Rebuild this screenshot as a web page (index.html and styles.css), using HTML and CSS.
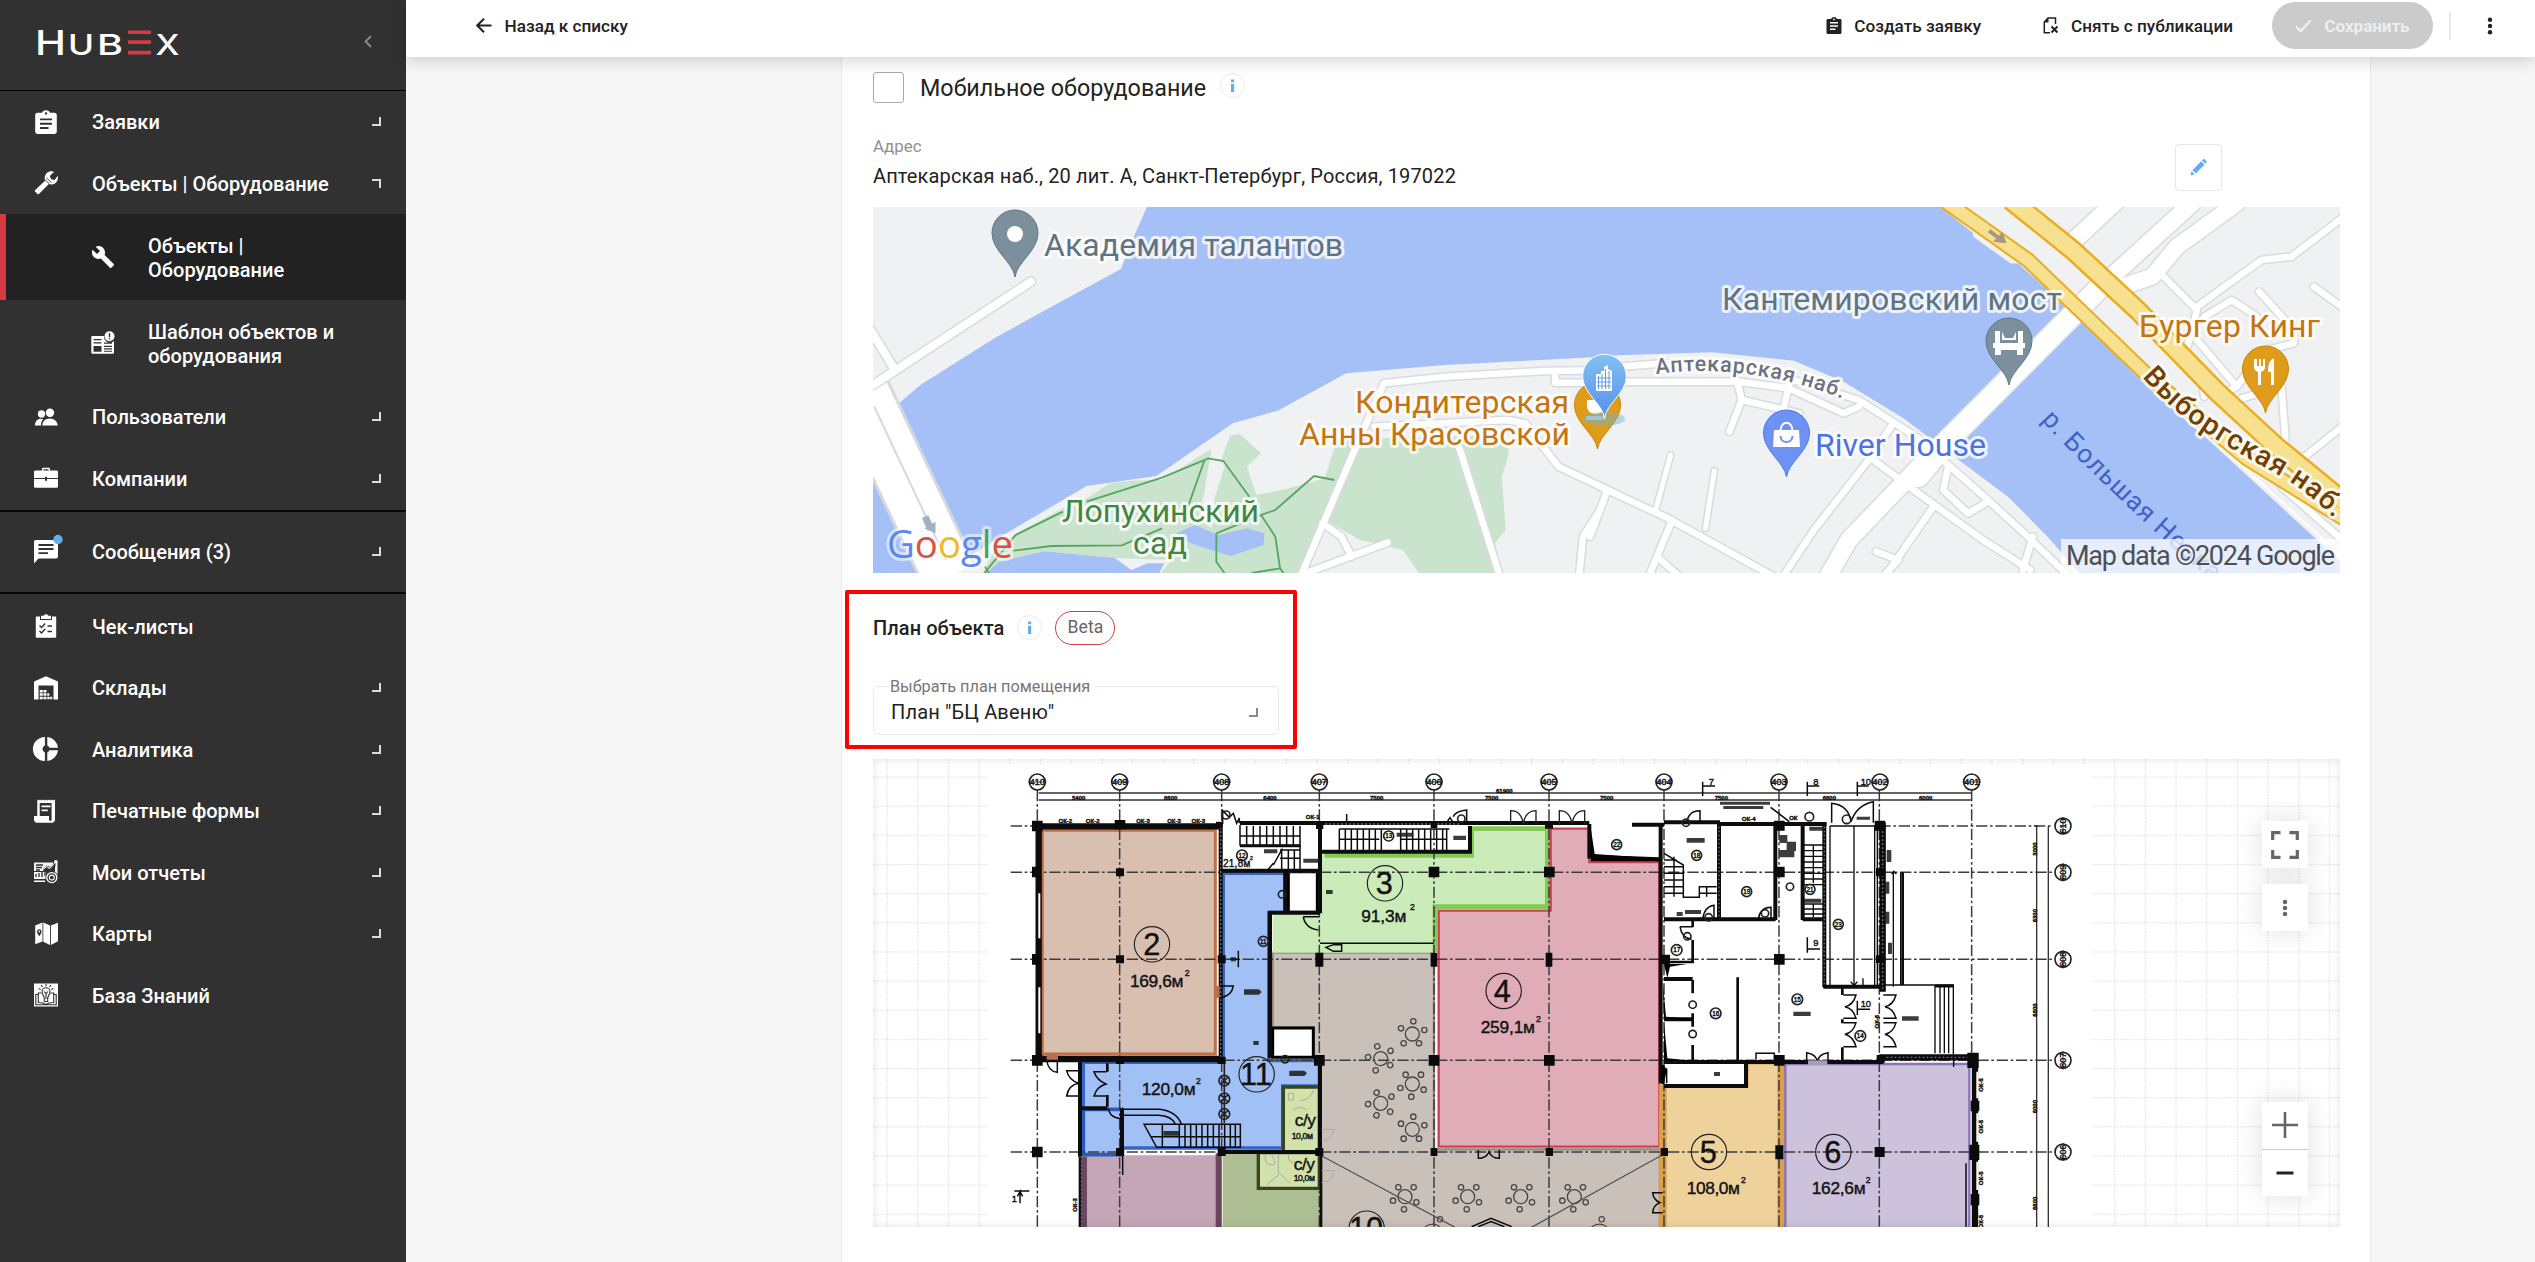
FILE: index.html
```html
<!DOCTYPE html>
<html lang="ru">
<head>
<meta charset="utf-8">
<title>HubEx</title>
<link rel="stylesheet" href="styles.css">
</head>
<body>
<div class="app">
  <aside class="sidebar">
    <div class="brand">
      <svg class="logo" viewBox="0 0 150 26" role="img" aria-label="HubEx">
        <g fill="#fff">
          <text x="-2" y="24.5" font-size="34" textLength="31" lengthAdjust="spacingAndGlyphs">H</text>
          <text x="31" y="24.5" font-size="29" textLength="26" lengthAdjust="spacingAndGlyphs">U</text>
          <text x="60" y="24.5" font-size="29" textLength="26" lengthAdjust="spacingAndGlyphs">B</text>
          <text x="118.500" y="24.5" font-size="29" textLength="24" lengthAdjust="spacingAndGlyphs">X</text>
        </g>
        <path d="M91 .5h23v3.600H91zM91 10.300h23v3.800H91zM91 20.700h23v3.800H91z" fill="#d63b43"/>
      </svg>
      <svg class="collapse" viewBox="0 0 8 13"><path d="M7 1 1.500 6.500 7 12"/></svg>
    </div>
    <nav>
      <div class="group">
        <a class="item"><svg class="ico" viewBox="0 0 24 24"><path d="M20.500 2.700H16C15.500 1.300 14 .3 12 .3S8.500 1.300 8 2.700H3.500c-1.300 0-2.300 1-2.300 2.200v16.800c0 1.200 1 2.200 2.300 2.200h17c1.300 0 2.300-1 2.300-2.200V4.900c0-1.200-1-2.200-2.300-2.200zM12 2.200a1.200 1.200 0 1 1 0 2.400 1.200 1.200 0 0 1 0-2.400zM14.500 19H6v-1.900h8.500zM18 14.700H6v-1.900h12zM18 10.300H6V8.400h12z"/></svg><span>Заявки</span><i class="caret"></i></a>
        <a class="item"><svg class="ico" viewBox="0 0 24 24"><path d="M1.200 19 11 9.800C10.200 6.800 10.800 4 12.800 2c2-1.800 5-2.200 7.300-1.200L15.800 5l1.300 3.300 3.600.8 2.900-4.300c.8 2.500.1 5.100-1.700 6.900-2 1.700-4.700 2.200-7 1.300L5.200 22.700c-.6.7-1.400.7-2 0l-2-2c-.5-.5-.5-1.200 0-1.700z"/><path d="m10.800 8.500 4.700 4.400M12.500 6.700l5 5" fill="none" stroke="#313131" stroke-width=".9"/></svg><span>Объекты | Оборудование</span><i class="caret caret-up"></i></a>
        <a class="item sub active"><svg class="ico" viewBox="0 0 24 24"><path d="M22.700 19l-9.100-9.100c.9-2.300.4-5-1.500-6.900-2-2-5-2.400-7.400-1.300L9 6 6 9 1.600 4.700C.4 7.100.9 10.100 2.900 12.100c1.900 1.900 4.600 2.400 6.900 1.500l9.100 9.100c.4.400 1 .4 1.400 0l2.300-2.300c.5-.4.5-1.100.1-1.400z"/></svg><span>Объекты |<br>Оборудование</span></a>
        <a class="item sub"><svg class="ico" viewBox="0 0 24 24"><path fill-rule="evenodd" d="M1.500 5H13a6 6 0 0 0 10 5v11.500c0 .8-.4 1.200-1 1.200H1.500c-.7 0-1.200-.5-1.200-1.200V6.200C.3 5.500.8 5 1.500 5zM2.500 8v1.300h8V8zm0 3.200v1.300h8v-1.300zM2.500 15v5.700h8V15zM13 11.500v1.300h8v-1.300zm0 3.300v1.300h8v-1.300zm0 2.500v1.200h8v-1.200zm0 2.500v1h8v-1z"/><circle cx="18.500" cy="5.300" r="5"/><path d="M17.800 2.200h1.400v4h-1.400zM17.800 7.200h1.400v1.300h-1.400z" fill="#313131"/></svg><span>Шаблон объектов и<br>оборудования</span></a>
        <a class="item"><svg class="ico" viewBox="0 0 24 24"><circle cx="7.500" cy="9" r="3.700"/><circle cx="16" cy="7.800" r="4.200"/><path d="M1 20.500c0-3.500 1.800-6.500 5.500-6.800 1 0 2 .2 2.800.5-1.800 1.600-2.500 4-2.300 6.300zM8.300 20.500c0-4.200 3.300-7 7.500-7s7.700 2.800 7.900 7z"/></svg><span>Пользователи</span><i class="caret"></i></a>
        <a class="item"><svg class="ico" viewBox="0 0 24 24"><path fill-rule="evenodd" d="M8 4.500V2.800c0-.6.400-1 1-1h6c.6 0 1 .4 1 1v1.700h6.500c.8 0 1.500.6 1.500 1.400V12h-11v-1.300h-2V12H0V5.900c0-.8.700-1.400 1.500-1.400zm1.400 0h5.200V3.200H9.400zM0 13.100h11v1.700h2v-1.700h11v7.300c0 .8-.7 1.400-1.500 1.400h-21c-.8 0-1.500-.6-1.500-1.400z"/></svg><span>Компании</span><i class="caret"></i></a>
      </div>
      <div class="group messages">
        <a class="item"><svg class="ico" viewBox="0 0 24 24"><path fill-rule="evenodd" d="M2 0h20c1.200 0 2 .8 2 2v14.500c0 1.200-.8 2-2 2H4.500L0 23.500V2C0 .8.800 0 2 0zm2.500 4v2h15V4zm0 4v2h15V8zm0 4.200v1.900H14v-1.900z"/><circle cx="24" cy="-.5" r="4.700" fill="#63aee8"/></svg><span>Сообщения (3)</span><i class="caret"></i></a>
      </div>
      <div class="group last">
        <a class="item"><svg class="ico" viewBox="0 0 24 24"><path d="M2.500 2.500H6V6h12V2.500h3.500c.4 0 .7.300.7.700V23c0 .4-.3.700-.7.700h-19c-.4 0-.7-.3-.7-.7V3.200c0-.4.300-.7.700-.7z"/><path d="M7 1.800h2.600C10 .8 10.900.2 12 .2s2 .6 2.400 1.600H17V5H7z"/><path d="m5.500 11.500 2 2 3.700-4M5.500 17l2 2 3.700-4M13.500 12H18M13.500 17.500H18" fill="none" stroke="#313131" stroke-width="1.400"/></svg><span>Чек-листы</span></a>
        <a class="item"><svg class="ico" viewBox="0 0 24 24"><path d="M0 5.500 12 .2l12 5.300v18h-4.500V9.500h-15v14H0z"/><path d="M5.700 14h3.100v2.500H5.700zM9.500 14h3v2.500h-3zM5.700 17.300h3.100v2.500H5.700zM9.500 17.300h3v2.500h-3zM13.300 17.300h2v2.500h-2zM5.700 20.700h3.100v2.500H5.700zM9.500 20.700h3v2.500h-3zM13.300 20.700h2.300v2.500h-2.300zM16.200 20.700h2v2.500h-2z"/></svg><span>Склады</span><i class="caret"></i></a>
        <a class="item"><svg class="ico" viewBox="0 0 24 24"><path d="M10.900 0v8.600a3.600 3.600 0 0 0 0 6.800V24A12 12 0 0 1 10.900 0zM13.300 0A12 12 0 0 1 24 10.800h-8.600a3.600 3.600 0 0 0-2.100-2.200zM13.300 24v-8.600a3.600 3.600 0 0 0 2.100-2.200H24A12 12 0 0 1 13.300 24z"/></svg><span>Аналитика</span><i class="caret"></i></a>
        <a class="item"><svg class="ico" viewBox="0 0 24 24"><path fill-rule="evenodd" d="M3.300.5 4.500 1.500 6 .5l1.500 1L9 .5l1.500 1 1.500-1 1.500 1 1.500-1 1.500 1 1.500-1 1.500 1 1.500-1v20c0 1.800-1.200 3.200-3 3.200H3C1.200 23.700 0 22.300 0 20.500V17h3.300zM5.700 4v13H15v3.500c0 .8.600 1.300 1.300 1.300s1.300-.5 1.300-1.300V4z"/><path d="M7.500 6.500h9v1.800h-9zM7.500 10.500h6.300v1.800H7.500z"/></svg><span>Печатные формы</span><i class="caret"></i></a>
        <a class="item"><svg class="ico" viewBox="0 0 24 24"><path d="M0 2.500h19V5l-3 4-4-2-3 4H0zM0 12h12v7H0zM22 1l1.500 1v14H21V8z" opacity=".95"/><path d="M2 5h7M2 7.500h6M2 10h4M2 14v3M5 13v4M8 11v6M11 9v7M9.500 9.500l4-4 3.500 2 5-6" fill="none" stroke="#313131" stroke-width="1.300"/><path d="m10 9 4-4 3 2.300 4.500-5.500" fill="none" stroke="#fff"/><circle cx="21.800" cy="1.800" r="1.800"/><circle cx="17.800" cy="17.600" r="6.400" fill="#313131"/><circle cx="17.800" cy="17.600" r="5" fill="none" stroke="#fff" stroke-width="1.300"/><circle cx="17.800" cy="17.600" r="2.500" fill="none" stroke="#fff" stroke-width="1.100"/><path d="M0 20.500h11v1.500H0z"/></svg><span>Мои отчеты</span><i class="caret"></i></a>
        <a class="item"><svg class="ico" viewBox="0 0 24 24"><path fill-rule="evenodd" d="M1.200 3.500 8.500.5v19l-7.300 2.700zM5.300 7.200c-1.300 0-2.300 1-2.300 2.300 0 1.600 2.300 4.700 2.300 4.700s2.300-3.100 2.300-4.700c0-1.300-1-2.300-2.300-2.300zM9.300.5l6.700 3V23l-6.700-3.200zM16.900 3.500 24 .8v18.500L16.900 23z"/><circle cx="5.300" cy="9.500" r=".9"/></svg><span>Карты</span><i class="caret"></i></a>
        <a class="item"><svg class="ico" viewBox="0 0 24 24"><path d="M0 .5h24v23H0z"/><g fill="none" stroke="#313131" stroke-width="1.100"><path d="M10.300 18.500V15C9.800 12.600 8 11.500 8 8.800a4 4 0 0 1 8 0c0 2.700-1.800 3.800-2.300 6.200v3.500zM12 10v6M10 8.500l2 2.200 2-2.200M12 1v2.300M7.200 2l1.200 2M16.800 2l-1.200 2M4.700 5.500l2 .9M19.300 5.500l-2 .9"/><path d="M7.500 10H4.300v9.500c3 0 5.700.5 7.700 2 2-1.500 4.700-2 7.700-2V10h-3.200M3.800 11.500H1.800v10.300h20.400V11.500h-2"/></g></svg><span>База Знаний</span></a>
      </div>
    </nav>
  </aside>

  <main class="main">
    <header class="topbar">
      <a class="action back"><svg viewBox="0 0 16 16"><path d="M15.500 8H1.500M8 1.200 1.200 8 8 14.800" fill="none" stroke="#222" stroke-width="2"/></svg>Назад к списку</a>
      <div class="spacer"></div>
      <a class="action create"><svg viewBox="0 0 16 17"><path fill-rule="evenodd" d="M1.800 2H5C5.500.8 6.500 0 8 0s2.500.8 3 2h3.200C15 2 15.500 2.600 15.500 3.300v12.200c0 .8-.5 1.400-1.300 1.400H1.800c-.8 0-1.300-.6-1.300-1.400V3.300C.5 2.600 1 2 1.800 2zM4 5v1.500h8V5zm0 3.200v1.500h8V8.200zm0 3.300V13h5.500v-1.500zM8 1.500A.9.900 0 1 0 8 3.300a.9.900 0 0 0 0-1.800z" fill="#222"/></svg>Создать заявку</a>
      <a class="action unpublish"><svg viewBox="0 0 16 17"><path d="M7 15.700H1.300V5L5 1h7.500v6" fill="none" stroke="#222" stroke-width="1.500"/><path d="M1 5.500 5.500.7v4.800z" fill="#222"/><path d="m8.500 9.500 6 6m0-6-6 6" stroke="#222" stroke-width="2"/></svg>Снять с публикации</a>
      <button class="save"><svg viewBox="0 0 17 14"><path d="m1.200 7.500 4.600 4.800L15.700 1.300" fill="none" stroke="#f0f0f0" stroke-width="2.400"/></svg>Сохранить</button>
      <i class="divider"></i>
      <svg class="more" viewBox="0 0 24 24"><circle cx="12" cy="5.800" r="2.200"/><circle cx="12" cy="12" r="2.200"/><circle cx="12" cy="18.200" r="2.200"/></svg>
    </header>

    <section class="card">
      <label class="mobile"><i class="check"></i><span>Мобильное оборудование</span><svg class="info" viewBox="0 0 25 25"><circle cx="12.500" cy="12.500" r="12"/><path d="M11 6.500h3.200v2.800H11zM11 10.800h3.200v8.200H11z"/></svg></label>

      <div class="address">
        <div>
          <div class="caption">Адрес</div>
          <div class="value">Аптекарская наб., 20 лит. А, Санкт-Петербург, Россия, 197022</div>
        </div>
        <button class="edit"><svg viewBox="0 0 17 17"><path d="M.5 16.500 1.600 12l2.900 3.400zM2.400 11.200l8.800-8.900 3.300 3.400-8.800 8.900zM12 1.500l.9-.9c.7-.7 1.500-.6 2.200 0l1 1.100c.7.700.7 1.500 0 2.200l-.8.900z"/></svg></button>
      </div>

      <svg class="map" viewBox="873 207 1467 366">
        <defs>
          <path id="pin" d="M0 0C-2-15-23-26-23-44a23 23 0 0 1 46 0C23-26 2-15 0 0z"/>
          <linearGradient id="blue" x1="0" y1="0" x2="0" y2="1"><stop offset="0" stop-color="#82c0f2"/><stop offset="1" stop-color="#5690ec"/></linearGradient>
          <g id="streets" fill="none" stroke-linejoin="round" stroke-linecap="round">
            <g transform="translate(860 200) scale(.47194 .33333)">
              <path class="w7" d="M362 245 28 555M20 385 55 465 73 508"/>
              <path class="w6" d="M1600 510 1450 513 1240 530 1110 550 1045 760 935 1125M1600 548H1473V522"/>
              <path class="w6" d="M1090 680 1370 660 1410 670 1480 800 1600 880M1270 745 1355 1125"/>
              <path class="w6" d="M980 970 1020 1010 1042 1070M1118 1028 945 1119M1568 930 1532 1010 1524 1125"/>
            </g>
            <g transform="translate(1600 200) scale(.49745 .33333)">
              <path class="w6" d="M0 505 130 490 270 500 400 545 520 600 640 715 780 900 860 1010 940 1125M-20 545H280L380 565 490 640 520 620"/>
              <path class="w6" d="M275 540 285 600 260 695M380 555 370 620M285 600 400 640M0 860 130 950 240 1040 350 1130M15 870-20 1010M145 960 98 1130M115 1070 160 1130"/>
              <path class="w5" d="M142 765 112 930M230 812 212 985"/>
              <path class="w6" d="M585 680 540 780 430 990 370 1125M550 780 640 880 770 1020 865 1110M670 920 575 1125M700 800 690 870 740 940 780 905M870 1010 850 1110M555 1055 600 1080 575 1119"/>
              <path class="w20" d="M680 740 500 1020 460 1125"/>
              <path class="w24" d="M1010 255 700 720 640 830"/>
              <path class="w20" d="M1010 255 1190 10M940 140 1040 0"/>
              <path class="w16" d="M1050 260 1110 230 1160 140 1280 10"/>
              <path class="w6" d="M1130 225 1200 330 1180 445M1200 320 1330 180 1390 170 1500 45M1435 260 1500 330M1325 275 1395 390 1395 430 1340 450M1215 350 1270 300 1320 350M1200 420 1280 560 1240 590M1280 560 1310 500M1290 595 1370 560 1378 720M1500 670 1400 790M1210 540 1215 590M1370 860 1500 1030"/>
            </g>
          </g>
        </defs>
        <path d="M873 207h1467v366H873z" fill="#f0f1f3"/>
        <g transform="translate(860 200) scale(.47194 .33333)">
          <path fill="#a5bff7" d="M610 15 580 110 553 207 400 325 290 410 130 553 78 615 70 640V680L20 660V1130H130L165 1085 230 1070 310 1000 480 858 628 828 790 670 885 632 1030 520 1240 495 1575 470V15z"/>
          <path fill="#c9e3cd" d="M262 1125 275 1070 325 1005 430 925 480 895 530 850 575 842 640 840 743 748 750 800 725 900 750 930 752 830 785 705 805 703 850 760 820 800 840 885 900 868 985 835 1010 720 1110 715 1365 705 1375 760 1360 830 1368 990 1345 1030 1362 1130H1190L1150 1050 1060 1020 985 960 935 1130H630L660 1080 540 1074 390 1054 300 1085z"/>
          <path fill="#f0f1f3" d="M743 760 720 960 745 985 750 900 775 790z"/>
          <path fill="#a5bff7" d="M670 1000 710 975 760 1005 820 985 857 1000 855 1035 785 1068 700 1030zM262 1125 295 1085 390 1054 540 1074 575 1110 610 1090 645 1090 630 1130z"/>
          <g class="trail"><path d="M260 1125 330 1005 430 935M480 905 640 833 738 775 770 783 825 890M730 780 695 920M325 1052 405 1038 555 1036 640 985M1005 840 962 828 880 930 850 945 880 1010 890 1105 830 1119M755 1000V1085L775 1125M755 1000 850 945M890 1105 900 1125M265 1100 275 1125"/></g>
        </g>
        <g transform="translate(1600 200) scale(.49745 .33333)">
          <path fill="#a5bff7" d="M-5 15V468L225 457 390 482 490 545 610 655 730 790 820 890 900 1010 970 1130H1520L1440 1018 1232 732 1100 560 960 350 840 190 825 190 750 100 680 15z"/>
          <path fill="#f0f1f3" d="M750 95V110L825 190H850z"/>
          <path class="w2" d="M1245 735 1440 1000 1520 1110" stroke="#fff" fill="none"/>
        </g>
        <g transform="translate(860 200) scale(.47194 .33333)" fill="none">
          <path d="M0 560 190 1130" stroke="#d5d8dd" stroke-width="58"/>
          <path d="M0 560 190 1130" stroke="#fff" stroke-width="52"/>
          <path class="w2" d="M30 620 183 1080" stroke="#d5d8dd"/>
          <path d="m138 950 12 38" stroke="#a2b0c4" stroke-width="7"/><path d="m136 985 24 15V965z" fill="#a2b0c4"/>
        </g>
        <use href="#streets" class="casing"/>
        <use href="#streets" class="street"/>
        <g transform="translate(1600 200) scale(.49745 .33333)" fill="none">
          <g stroke="#e9ae1f"><path class="w23" d="M690 0 860 180 1100 525 1300 775 1500 960"/><path class="w25" d="M825 0 950 150 1080 330 1240 575 1360 740 1520 935"/></g>
          <g stroke="#f7e08f"><path class="w18" d="M690 0 860 180 1100 525 1300 775 1500 960"/><path class="w21" d="M825 0 950 150 1080 330 1240 575 1360 740 1520 935"/></g>
          <path class="w3" d="m782 92 22 25" stroke="#a39a80"/><path d="m790 125 27 5-8-35z" fill="#a39a80"/>
        </g>

        <g stroke-width="1">
          <use href="#pin" x="1015" y="277" fill="#7b8f9c" stroke="#5f7687"/><circle cx="1015" cy="234" r="8" fill="#fff"/>
          <use href="#pin" x="2009" y="385" fill="#7b8f9c" stroke="#5f7687"/>
          <use href="#pin" x="1786.500" y="477" fill="#6d92f4" stroke="#4d78e6"/>
          <use href="#pin" x="2265.500" y="413" fill="#df9c1b" stroke="#c98400"/>
          <use href="#pin" x="1597.500" y="449" fill="#df9c1b" stroke="#c98400"/>
        </g>
        <path d="M1587 400h18v6c0 5-4 8-9 8s-9-3-9-8z" fill="#fff"/>
        <ellipse cx="1604" cy="419" rx="21" ry="7" fill="#6fb4cf" opacity=".45"/>
        <path d="M1586 416h20v4h-20z" fill="#9fc4d8"/>
        <g transform="translate(1604.500 418) scale(.95)"><use href="#pin" fill="url(#blue)" stroke="#fff"/></g>
        <path d="M1596 374h5v-3h3v-4l4-2v4l4 2v20h-16z" fill="#fff"/><path d="M1598.500 376v13m3.500-15v15m3.500-20v20m3.500-18v18M1597 378h14m-14 4h14m-14 4h14" stroke="#609bed" stroke-width="1"/>
        <path d="M1995 331h5v12h18v-12h5v12h2v5h-2v7h-6v-5h-16v5h-6v-7h-2v-5h2zM2002 332l3 6h8l3-6v8h-14z" fill="#fff"/>
        <path d="M1774 430h25l1 17h-27z" fill="#fff"/><path d="M1780.500 431c0-11 12-11 12 0" fill="none" stroke="#fff" stroke-width="2"/><path d="M1780.500 436c0 8 12 8 12 0" fill="none" stroke="#6d92f4" stroke-width="2"/>
        <path d="M2254 359v8c0 3 2 4 4 5v13h3v-13c2-1 4-2 4-5v-8h-2v7h-2v-7h-2v7h-2v-7zM2274 358c-5 2-6 8-6 14h3v13h3z" fill="#fff"/>

        <g class="label" font-size="32">
          <g fill="#5f7383"><text x="1044" y="255.500" textLength="299">Академия талантов</text><text x="1722" y="310" textLength="340">Кантемировский мост</text></g>
          <g fill="#c5750f"><text x="1355" y="412.700" textLength="214">Кондитерская</text><text x="1299" y="445" textLength="271">Анны Красовской</text><text x="2139" y="336.700" textLength="181">Бургер Кинг</text></g>
          <g fill="#41863f"><text x="1062" y="522" textLength="197">Лопухинский</text><text x="1133" y="554" textLength="54">сад</text></g>
          <text x="1815" y="456" textLength="171" fill="#4a74e4">River House</text>
          <path id="q1" d="M1656 374Q1750 362 1846 400" fill="none" stroke="none"/>
          <text font-size="21.500" font-weight="500" fill="#6b7280"><textPath href="#q1" textLength="190">Аптекарская наб.</textPath></text>
          <path id="q2" d="M2142 377C2190 432 2240 452 2290 482Q2312 496 2338 522" fill="none" stroke="none"/>
          <text font-size="28.500" font-weight="500" fill="#6f3f05"><textPath href="#q2" textLength="240">Выборгская наб.</textPath></text>
        </g>
        <path id="q3" d="M2041 420Q2110 495 2224 592" fill="none"/>
        <text font-size="26" fill="#3f62c4"><textPath href="#q3" textLength="236">р. Большая Невка</textPath></text>
        <path d="M2061 539h279v34h-279z" fill="#fff" opacity=".72"/>
        <text x="2066" y="565" font-size="27" textLength="269" fill="#4d4f54">Map data ©2024 Google</text>
        <text class="google" x="887" y="557.500" textLength="126" lengthAdjust="spacingAndGlyphs"><tspan fill="#5b86ee">G</tspan><tspan fill="#dc5240">o</tspan><tspan fill="#f1b828">o</tspan><tspan fill="#5b86ee">g</tspan><tspan fill="#47a35a">l</tspan><tspan fill="#dc5240">e</tspan></text>
      </svg>

      <div class="plan-head">
        <div class="title"><h3>План объекта</h3><svg class="info" viewBox="0 0 25 25"><circle cx="12.500" cy="12.500" r="12"/><path d="M11 6.500h3.200v2.800H11zM11 10.800h3.200v8.200H11z"/></svg><span class="beta">Beta</span></div>
        <fieldset class="select"><legend>Выбрать план помещения</legend><span>План "БЦ Авеню"</span><i class="caret"></i></fieldset>
        <i class="highlight"></i>
      </div>

      <div class="plan">
        <svg viewBox="873 759 1467 468">
          <defs>
            <pattern id="grid" patternUnits="userSpaceOnUse" x="886.500" y="776.500" width="30.690" height="29.150"><path d="M0 .6h30.690M.6 0v29.150" fill="none" stroke="#e2e2e2" stroke-width="1.300" stroke-dasharray="1.600 1.400"/></pattern>
            <g id="table" fill="none" stroke="#4a4644" stroke-width="4"><circle r="21"/><circle cx="3" cy="-38" r="8"/><circle cx="36" cy="-12" r="8"/><circle cx="-34" cy="-17" r="8"/><circle cx="20" cy="28" r="8"/><circle cx="-26" cy="28" r="8"/></g>
            <g id="door" fill="none" stroke="#222" stroke-width="4"><path d="M-38 0v-44Q-6-44 0-4Q6-44 38-44V0"/></g>
          </defs>
          <path d="M873 759h1467v468H873z" fill="url(#grid)"/>
          <path d="M988 765h1103v470H988z" fill="#fff"/>
          <g transform="translate(960 750) scale(.33333)">
            <path fill="#cac0ba" stroke="#94877f" stroke-width="7" d="M938 608H1422V1198H2100V1440H1080V930H1060V832H938z"/>
            <path fill="#d9bfb0" stroke="#bf7143" stroke-width="9" d="M247 241H766V912H247z"/>
            <path fill="#a1c0f6" stroke="#3465c4" stroke-width="10" d="M790 370H974V487H926V932H1078V1008H968V1194H488V1214H370V937H790z"/>
            <path fill="#cbebb8" d="M938 492H1080V310H1535V232H1767V475H1422V608H938z"/>
            <path fill="none" stroke="#83ca55" stroke-width="14" d="M1094 316H1535V236H1762V470H1425V606"/>
            <path fill="#e0acb8" stroke="#c9404f" stroke-width="7" d="M1772 236H1888V336H2098V1190H1436V482H1772z"/>
            <path fill="#efd19c" stroke="#dd9d3a" stroke-width="7" d="M2100 1008H2362V940H2472V1440H2100z"/>
            <path stroke="#dba04a" stroke-width="20" d="M2462 942V1440M2110 1010V1440"/>
            <path fill="#ccc2db" stroke="#8c72b8" stroke-width="7" d="M2476 942H3028V1440H2476z"/>
            <path fill="#c4a6b7" d="M370 1216H785V1440H370z"/><path stroke="#6b4660" stroke-width="18" d="M776 1210V1440M372 1220V1440"/>
            <path fill="#adbf92" d="M788 1208H1080V1440H788z"/>
            <path fill="#d3e2aa" stroke="#37461c" stroke-width="10" d="M970 1011H1078V1205H970zM895 1208H1078V1315H895z"/>
            <path d="M370 1078H486V1214H370z" fill="#a1c0f6" stroke="#2c5abb" stroke-width="11"/>
            <path fill="#fff" stroke="#000" stroke-width="9" d="M985 365H1072V487H985zM938 834H1060V922H938z"/>
            <path fill="#fff" d="M790 224H1078V358H790zM1092 228H1532V302H1092zM2112 942H2355V1003H2112z"/>

            <g class="axis">
              <path d="M232 120V1440M479 120V1440M785 120V1210M1078 120V1440M1422 120V1440M1767 120V1440M2112 120V1440M2457 120V1440M2758 120V1440M3035 120V910"/>
              <path d="M152 228H232M2758 228H3280M152 367H3280M152 628H3280M152 931H3280M152 1206H3280"/>
            </g>
            <path d="M236 129H3035M236 150H3035M3230 228V1440M3265 228V1440M3235 228h-12" stroke="#333" stroke-width="4" fill="none"/>
            <path d="M1080 1215 1500 1440M2112 1212 1700 1440" stroke="#555" stroke-width="4" fill="none"/>

            <g fill="none" stroke="#0c0c0c">
              <path stroke-width="19" d="M236 228V931M232 229H785M232 927H785M2768 218V725M2758 922H3052M3045 912V1440"/>
              <path stroke-width="12" d="M782 220V930M840 219H1888M1080 220V490M976 362V488M780 362H1080M930 488V925M925 488H1080M2016 224H2112M2102 224V1000M1084 305H1530V228M1888 222V320L2100 328M2112 217H2280M2280 222H2600M2277 222V510M2446 222V510M2528 222V510M2593 222V712M2112 508H2447M2528 508H2593M2590 710H2770M2112 936H2770M2358 940V1008H2112M360 930V1220M364 1075H442M486 1075V1215M1080 930V1206M788 1206H1080M2112 687H2198M2112 808H2198"/>
              <path stroke-width="8" d="M2198 510V530M2198 570V640M2198 690V730M2198 790V830M2198 885V935M2333 682V930M2647 712V735M2647 808V820M2647 892V932M2112 636H2198M442 940V965M442 1035V1070M1083 1210V1440M360 1220V1440M2828 367V705"/>
              <path stroke="#fff" stroke-width="6" d="M238 430V565M238 712V850M3052 965V1045M3052 1090V1175M3052 1235V1320"/>
              <path stroke="#777" stroke-width="4" stroke-dasharray="5 7" d="M782 232V925M1084 222H1500M2768 232V720M2780 922H3040M2277 230V505M2593 230V705M364 1220V1430"/>
              <path stroke-width="4.500" d="M840 225V285H1022M840 258H1022M860 228v56M880 228v56M900 228v56M920 228v56M940 228v56M960 228v56M980 228v56M1000 228v56M1020 228v130M960 300H1020M960 325H1020M940 345 965 300V358M985 300v58M1003 300v58M925 358l15-18"/>
              <path stroke-width="8" d="M840 288H1022"/>
              <path stroke-width="4.500" d="M1138 237v66M1156 237v66M1174 237v66M1192 237v66M1210 237v66M1228 237v66M1246 237v66M1264 237v66M1322 237v66M1340 237v66M1358 237v66M1376 237v66M1394 237v66M1412 237v66M1430 237v66M1448 237v66M1460 237v66M1138 268h120M1322 268h140M1138 237h330"/>
              <path stroke-width="4.500" d="M552 1123H841V1192H590zM658 1123v70M675 1123v70M692 1123v70M709 1123v70M726 1123v70M743 1123v70M760 1123v70M777 1123v70M794 1123v70M811 1123v70M826 1123v70M658 1160h183M607 1123v70M572 1160h86M490 1078H600Q650 1085 664 1122M490 1096H595Q635 1098 646 1122M445 1075Q450 1106 490 1106"/>
              <path stroke-width="4.500" d="M2112 330H2150M2112 350H2170M2112 370H2170M2112 390H2170M2112 410H2170M2112 430H2170M2142 320V440M2112 310 2170 345V442H2218V410H2270M2218 430H2270M2240 410v30"/>
              <path stroke-width="4" d="M2532 285h58M2532 302h58M2532 319h58M2532 336h58M2532 353h58M2532 370h58M2532 387h58M2532 404h58M2532 462h58M2532 477h58M2532 492h58M2560 285v115M2560 462v40"/>
              <path stroke-width="4" d="M2610 228V705M2682 228V705M2744 228V705M2752 228V705M2610 228H2750M2800 367V710M2822 367V705M2770 705H2980V912M2925 705v205M2940 705v205M2953 705v205M2966 705v205M2672 695l10 12 10-12M2709 685v22M2795 372l6-8 8 8"/>
              <path stroke-width="9" d="M2925 708h55"/>
              <path stroke-width="4.500" d="M2770 735H2808Q2800 765 2775 770Q2800 775 2808 805H2770M2770 818H2808Q2800 848 2775 853Q2800 860 2808 890H2770M2650 735H2688Q2680 765 2655 770Q2680 775 2688 805H2650M2650 818H2688Q2680 848 2655 853Q2680 860 2688 890H2650"/>
              <path stroke-width="4.500" d="M2615 218V160Q2665 165 2673 215Q2690 165 2740 155V218M2180 218q5-36 40-36v36M360 962H320Q326 990 356 1000Q326 1005 320 1038H360M440 965H402Q410 990 438 1002Q410 1010 402 1038H440M260 930Q265 965 292 967V930M780 708H820Q815 738 785 742M1030 500H1078M1030 500Q1035 535 1075 540M2540 935V908Q2568 912 2572 935Q2576 912 2604 908V935M788 222V182l20 20 12-12 10 30 8-16v16M2395 508q5-36 38-36v36M2228 508q5-38 34-42v42M2160 530h40M2160 530q5 35 35 38M2120 955V1000M1555 1200V1225Q1580 1225 1587 1205Q1595 1225 1618 1225V1200M2108 1328H2078Q2080 1350 2100 1358Q2080 1365 2078 1388H2108M1080 580H1422M1098 592 1120 584H1145V604H1120zM1460 218l10 -15 10 15M1480 200q5-16 40-20v38M1535 1430l58-25 62 25M1555 1430l38-15 40 15M2388 928v-18h55v18"/>
              <path stroke="#aaa" stroke-width="3" d="M1085 1138h38q-8 32-38 34M1085 1262h38q-4 34-38 36M985 1030h15v20h-15zM1060 1020q-8 30-38 32M1000 1080q20-15 40 0M915 1215q0 30 20 30t0-30M955 1215v60l-35 30M960 1270l30 30M985 1215q0 30 20 20"/>
              <path stroke-width="4.500" d="M835 602V652M810 628H835M163 1323H208M180 1360V1325l-8 14m8-14 8 14M488 1215V1275M2228 95V138M2230 108H2265M2542 95V138M2544 108H2578M2692 95V138M2694 108H2726M2542 562V608M2544 597H2580M2692 752V795M2694 778H2730M2432 172 2488 215M2981 930V950M3018 1440V1240M1160 192V215"/>
            </g>
            <path d="M2108 694 2118 800 2198 806V812L2112 806zM2112 816 2122 925 2195 932H2112zM2112 642H2180L2130 650 2122 684zM2112 945 2120 960 2112 1003H2104V945zM1892 232l12 80 196 14v8h-208z" fill="#000"/>
            <path fill="#0a0a0a" d="M216 212h32v32h-32zM464 210h32v28h-32zM2442 212h32v30h-32zM2744 212h32v30h-32zM468 355h24v24h-24zM1406 350h32v32h-32zM1752 350h32v32h-32zM2442 350h32v32h-32zM2748 355h24v24h-24zM216 350h24v32h-24zM216 612h24v32h-24zM468 616h24v24h-24zM773 616h24v24h-24zM1066 608h24v42h-24zM1412 608h20v42h-20zM1757 608h20v42h-20zM2100 614h30v28h-30zM2442 612h32v32h-32zM2748 616h24v24h-24zM216 915h32v32h-32zM468 920h24v22h-24zM773 920h24v22h-24zM1062 915h32v32h-32zM1406 915h32v32h-32zM1752 915h32v32h-32zM2442 915h32v32h-32zM2750 915h24v24h-24zM3022 908h34v46h-34zM216 1190h32v32h-32zM468 1194h24v24h-24zM773 1194h24v24h-24zM1066 1194h24v24h-24zM1412 1194h20v24h-20zM1757 1194h22v24h-22zM2102 1194h22v24h-22zM2446 1186h24v42h-24zM2744 1191h30v30h-30zM3028 1184h30v46h-30zM3032 1052h26v32h-26zM3032 1332h26v34h-26zM768 215h20v20h-20zM1068 215h22v22h-22zM1412 216h20v18h-20zM1755 216h24v20h-24z"/>
            <path fill="#b8704a" d="M765 708h14v36h-14zM260 915h34v14h-34z"/>
            <path fill="#a89bbd" d="M2544 931h58v14h-58z"/>
            <path fill="#1a1a1a" d="M852 718h45l8 8-8 8h-45zM988 962h45l8 8-8 8h-45zM1030 326h50v12h-50zM912 298h40v12h-40zM610 1143h48v14h-48zM2180 264h54v14h-54zM2175 480h48v12h-48zM2150 486h18v12h-18zM2500 785h52v13h-52zM2826 799h50v13h-50zM1480 257h38v13h-38zM2548 230h42v12h-42zM2532 446h52v12h-52zM2262 966h18v12h-18zM880 873h16v12h-16zM2458 255h24v24h-24zM2480 275h28v28h-28zM2458 300h45v22h-45zM812 622h16v12h-16zM1098 420h20v12h-20zM2280 155h150v9h-150zM2290 168h120v9h-120zM2780 300h14v36h-14zM2776 395h12v36h-12zM2776 485h12v36h-12zM2784 578h12v34h-12zM1310 248h50v12h-50zM2690 200h40v9h-40z" opacity=".85"/>
            <use href="#door" x="1690" y="226"/><use href="#door" x="1836" y="226"/>

            <use href="#table" x="1357" y="852"/><use href="#table" transform="translate(1262 926) rotate(-20)"/><use href="#table" transform="translate(1357 1002) rotate(180)"/><use href="#table" transform="translate(1262 1060) rotate(195)"/><use href="#table" x="1357" y="1138"/>
            <use href="#table" transform="translate(1335 1340) rotate(180)"/><use href="#table" transform="translate(1523 1340) rotate(180)"/><use href="#table" transform="translate(1682 1340) rotate(180)"/><use href="#table" transform="translate(1843 1340) rotate(180)"/>
            <g fill="none" stroke="#4a4644" stroke-width="3.500"><circle cx="1440" cy="1408" r="8"/><circle cx="1925" cy="1408" r="8"/><path d="M1395 1430q25-15 45 0M1895 1430q25-15 45 0"/></g>

            <g fill="none" stroke="#222" stroke-width="5">
              <g fill="#fff"><circle cx="232" cy="96" r="24"/><circle cx="479" cy="96" r="24"/><circle cx="785" cy="96" r="24"/><circle cx="1078" cy="96" r="24"/><circle cx="1422" cy="96" r="24"/><circle cx="1767" cy="96" r="24"/><circle cx="2112" cy="96" r="24"/><circle cx="2457" cy="96" r="24"/><circle cx="2760" cy="96" r="24"/><circle cx="3035" cy="96" r="24"/>
              <circle cx="3309" cy="228" r="24"/><circle cx="3309" cy="367" r="24"/><circle cx="3309" cy="628" r="24"/><circle cx="3309" cy="931" r="24"/><circle cx="3309" cy="1206" r="24"/></g>
              <path d="M205 96h54M452 96h54M758 96h54M1051 96h54M1395 96h54M1740 96h54M2085 96h54M2430 96h54M2733 96h54M3008 96h54M3309 201v54M3309 340v54M3309 601v54M3309 904v54M3309 1179v54" stroke-width="2.500"/>
              <g stroke-width="3.500"><circle cx="576" cy="583" r="53"/><circle cx="890" cy="973" r="53"/><circle cx="1275" cy="400" r="53"/><circle cx="1631" cy="723" r="53"/><circle cx="2247" cy="1206" r="53"/><circle cx="2620" cy="1206" r="53"/><circle cx="1220" cy="1436" r="53"/></g>
              <circle cx="793" cy="992" r="16"/><circle cx="793" cy="1045" r="16"/><circle cx="793" cy="1092" r="16"/><path d="M782 981l22 22m0-22-22 22M782 1034l22 22m0-22-22 22M782 1081l22 22m0-22-22 22M793 940v180"/>
              <circle cx="966" cy="433" r="11"/><circle cx="910" cy="574" r="15"/><circle cx="975" cy="928" r="11"/><circle cx="846" cy="316" r="16"/><circle cx="798" cy="195" r="12"/><circle cx="1286" cy="258" r="15"/><circle cx="1970" cy="284" r="15"/><circle cx="2210" cy="316" r="15"/><circle cx="2360" cy="425" r="15"/><circle cx="2550" cy="418" r="15"/><circle cx="2490" cy="410" r="11"/><circle cx="2635" cy="523" r="15"/><circle cx="2150" cy="600" r="16"/><circle cx="2182" cy="559" r="11"/><circle cx="2512" cy="748" r="16"/><circle cx="2267" cy="790" r="16"/><circle cx="2701" cy="858" r="16"/><circle cx="2198" cy="764" r="11"/><circle cx="2198" cy="852" r="11"/><circle cx="2246" cy="502" r="11"/><circle cx="2415" cy="490" r="11"/><circle cx="2660" cy="208" r="13"/><circle cx="2548" cy="200" r="13"/><circle cx="2178" cy="218" r="11"/><circle cx="1504" cy="206" r="11"/>
            </g>
            <g class="room">
              <g font-size="92" text-anchor="middle"><text x="575" y="615">2</text><text x="888" y="1005">11</text><text x="1273" y="432">3</text><text x="1627" y="755">4</text><text x="2245" y="1239">5</text><text x="2618" y="1239">6</text><text x="1218" y="1466">10</text></g>
              <g font-size="52"><text x="510" y="710" textLength="160">169,6м</text><text x="545" y="1036" textLength="162">120,0м</text><text x="1204" y="515" textLength="135">91,3м</text><text x="1562" y="850" textLength="163">259,1м</text><text x="2180" y="1332" textLength="160">108,0м</text><text x="2555" y="1332" textLength="162">162,6м</text><text x="1004" y="1128" textLength="64">с/у</text><text x="1001" y="1259" textLength="64">с/у</text></g>
              <g font-size="26"><text x="674" y="678">2</text><text x="708" y="1003">2</text><text x="1350" y="481">2</text><text x="1728" y="817">2</text><text x="2343" y="1298">2</text><text x="2717" y="1298">2</text><text x="995" y="1167" textLength="64">10,0м</text><text x="1001" y="1292" textLength="64">10,0м</text></g>
              <text x="789" y="350" font-size="30" textLength="82">21,8м</text><text x="870" y="330" font-size="15">2</text>
              <g font-size="27" text-anchor="middle"><text x="232" y="106">410</text><text x="479" y="106">409</text><text x="785" y="106">408</text><text x="1078" y="106">407</text><text x="1422" y="106">406</text><text x="1767" y="106">405</text><text x="2112" y="106">404</text><text x="2457" y="106">403</text><text x="2760" y="106">402</text><text x="3035" y="106">401</text></g>
              <g font-size="27" text-anchor="middle"><text transform="translate(3319 228) rotate(-90)">610</text><text transform="translate(3319 367) rotate(-90)">609</text><text transform="translate(3319 628) rotate(-90)">608</text><text transform="translate(3319 931) rotate(-90)">607</text><text transform="translate(3319 1206) rotate(-90)">606</text></g>
              <g font-size="18" font-weight="700" text-anchor="middle"><text x="356" y="149">5400</text><text x="632" y="149">6600</text><text x="930" y="149">6400</text><text x="1250" y="149">7500</text><text x="1595" y="149">7500</text><text x="1940" y="149">7500</text><text x="2284" y="149">7500</text><text x="2608" y="149">6600</text><text x="2897" y="149">6000</text><text x="1633" y="128">61900</text>
              <text x="316" y="218">ОК-2</text><text x="398" y="218">ОК-2</text><text x="549" y="218">ОК-3</text><text x="642" y="218">ОК-3</text><text x="715" y="218">ОК-3</text><text x="1058" y="206">ОК-1</text><text x="2366" y="213">ОК-4</text><text x="2500" y="211">ОК</text>
              <text transform="translate(3230 297) rotate(-90)">3000</text><text transform="translate(3230 497) rotate(-90)">6300</text><text transform="translate(3230 780) rotate(-90)">6600</text><text transform="translate(3230 1070) rotate(-90)">6000</text><text transform="translate(3230 1360) rotate(-90)">6600</text>
              <text transform="translate(3068 1005) rotate(-90)">ОК-5</text><text transform="translate(3068 1130) rotate(-90)">ОК-5</text><text transform="translate(3068 1285) rotate(-90)">ОК-5</text><text transform="translate(3068 1415) rotate(-90)">ОК-5</text><text transform="translate(350 1365) rotate(-90)">ОК-3</text><text transform="translate(2758 815) rotate(-90)">ОК-6</text></g>
              <g font-size="19" text-anchor="middle"><text x="910" y="581">11</text><text x="846" y="323">12</text><text x="1286" y="265">13</text><text x="1970" y="291">22</text><text x="2210" y="323">18</text><text x="2360" y="432">19</text><text x="2550" y="425">21</text><text x="2635" y="530">23</text><text x="2150" y="607">17</text><text x="2512" y="755">15</text><text x="2267" y="797">16</text><text x="2701" y="865">14</text></g>
              <g font-size="28"><text x="2246" y="106">7</text><text x="2560" y="106">8</text><text x="2702" y="106">10</text><text x="2560" y="588">9</text><text x="2702" y="770">10</text><text x="155" y="1357">1</text></g>
            </g>
          </g>
        </svg>
        <div class="tools top">
          <button><svg viewBox="0 0 28 28"><path d="M1.700 9V1.700H9.500M18.500 1.700h7.800V9M26.300 19v7.300h-7.800M9.500 26.300H1.700V19" fill="none" stroke="#666" stroke-width="3.200"/></svg></button>
          <button><svg viewBox="0 0 28 28" fill="#666"><circle cx="14" cy="8" r="2.200"/><circle cx="14" cy="14" r="2.200"/><circle cx="14" cy="20" r="2.200"/></svg></button>
        </div>
        <div class="tools bottom">
          <button><svg viewBox="0 0 28 28"><path d="M1 14h26M14 1v26" stroke="#666" stroke-width="2.600"/></svg></button>
          <button><svg viewBox="0 0 28 28"><path d="M5.500 14h17" stroke="#222" stroke-width="3"/></svg></button>
        </div>
      </div>
    </section>
  </main>
</div>
</body>
</html>
```
FILE: styles.css
```css
* { box-sizing: border-box; }
body {
  margin: 0;
  font-family: Roboto, sans-serif;
  font-size: 20px;
  color: #222;
  background: #f7f7f7;
}
button { font: inherit; padding: 0; border: 0; background: #fff; }
.app { display: flex; height: 1262px; overflow: hidden; }

/* Sidebar */
.sidebar { width: 406px; flex: none; background: #313131; color: #fff; font-weight: 500; }
.brand { height: 91px; display: flex; align-items: flex-start; border-bottom: 1px solid #000; padding: 29.500px 34px 0 37px; justify-content: space-between; }
.logo { width: 150px; height: 26px; overflow: visible; font-family: Inter, sans-serif; font-weight: 500; }
.collapse { width: 8px; height: 13px; margin-top: 5px; fill: none; stroke: #8c8c8c; stroke-width: 1.800; }
.group { border-bottom: 2px solid #090909; padding-bottom: 1px; }
.messages { padding: 9px 0 9px; }
.last { border: 0; padding-top: 2px; }
.item { display: flex; align-items: center; height: 61.500px; padding: 0 25px 0 34px; line-height: 24px; }
.item span { flex: 1; margin-left: 34px; position: relative; top: .5px; }
.ico { width: 24px; height: 24px; fill: #fff; overflow: visible; flex: none; }
.item.sub { height: 86px; padding-left: 91px; }
.item.sub span { margin-left: 33px; }
.item.active { background: #222; box-shadow: inset 6px 0 #d63b43; }
.caret { width: 9px; height: 9px; border: solid #ddd; border-width: 0 2px 2px 0; }
.caret-up { border-width: 2px 2px 0 0; }

/* Top bar */
.main { flex: 1; position: relative; display: flex; flex-direction: column; }
.topbar { position: relative; z-index: 2; height: 57px; flex: none; background: #fff; display: flex; align-items: center; padding: 0 33px 6px 70px; box-shadow: 0 4px 16px rgba(0,0,0,.17); font-size: 17.150px; font-weight: 500; }
.spacer { flex: 1; }
.action { display: flex; align-items: center; gap: 12.500px; line-height: 20px; }
.action svg { width: 16px; height: 17px; }
.create { margin-right: 61.500px; }
.unpublish { margin-right: 39px; }
.save { display: flex; align-items: center; justify-content: center; gap: 12px; width: 161px; height: 47px; border-radius: 24px; background: #cbcbcb; color: #eee; font-weight: 700; letter-spacing: -.1px; }
.save svg { width: 17px; height: 14px; }
.divider { width: 2px; height: 28px; background: #e8e8e8; margin: 0 27px 0 16px; }
.more { width: 24px; height: 24px; fill: #222; }

/* Card */
.card { width: 1530px; height: 1205px; margin: 0 auto 0 435px; padding: 15px 30.500px 0 31px; background: #fff; border: solid #e9e9e9; border-width: 0 1px; }
.mobile { display: flex; align-items: center; height: 31px; font-size: 23.300px; line-height: 30px; }
.check { width: 31px; height: 31px; border: 1px solid #a9a9a9; border-radius: 3px; margin-right: 16px; }
.info { width: 25px; height: 25px; fill: #67aee9; }
.info circle { fill: #fff; stroke: #ececec; }
.mobile .info { margin: -5px 0 0 14px; }
.address { display: flex; justify-content: space-between; align-items: flex-start; margin-top: 33px; height: 52px; }
.caption { font-size: 16.900px; line-height: 20px; color: #909090; margin-bottom: 8px; }
.value { line-height: 24px; letter-spacing: .14px; }
.edit { width: 47px; height: 47px; margin: 8px 118px 0 0; border: 1px solid #e6e6e6; border-radius: 4px; display: grid; place-items: center; }
.edit svg { width: 17px; height: 17px; fill: #67aee9; }

/* Map */
.map { display: block; width: 1467px; height: 366px; margin-top: 19px; }
.map path { vector-effect: non-scaling-stroke; }
.casing { stroke: #d9dbdf; --edge: 3px; }
.street { stroke: #fff; --edge: 0px; }
.w2 { stroke-width: 2px; }
.w3 { stroke-width: 4px; }
.w5 { stroke-width: calc(5px + var(--edge)); }
.w6 { stroke-width: calc(6.500px + var(--edge)); }
.w7 { stroke-width: calc(8px + var(--edge)); }
.w16 { stroke-width: calc(16px + var(--edge)); }
.w18 { stroke-width: 12px; }
.w20 { stroke-width: calc(17px + var(--edge)); }
.w21 { stroke-width: 16px; }
.w23 { stroke-width: 16px; }
.w24 { stroke-width: calc(21px + var(--edge)); }
.w25 { stroke-width: 21px; }
.trail { fill: none; stroke: #57a660; stroke-width: 1.800; }
.label { paint-order: stroke; stroke: rgba(255,255,255,.78); stroke-width: 6px; stroke-linejoin: round; }
.google { font-family: "Open Sans", sans-serif; font-size: 39px; font-weight: 500; paint-order: stroke; stroke: rgba(255,255,255,.55); stroke-width: 6px; stroke-linejoin: round; }

/* Floor plan */
.plan-head { position: relative; width: 406px; margin-top: 38px; }
.title { display: flex; align-items: center; height: 34px; }
.title h3 { margin: 0; font-size: 20px; font-weight: 500; letter-spacing: .07px; }
.title .info { margin: -1px 13px 0; }
.beta { width: 60px; height: 34px; border: 1.500px solid #cf4049; border-radius: 17px; text-align: center; line-height: 31px; font-size: 17.600px; color: #666; }
.select { position: relative; display: flex; align-items: center; justify-content: space-between; margin: 33px 0 0; height: 57px; padding: 0 20px 5px 17px; border: 1px solid #e8e8e8; border-radius: 5px; letter-spacing: .15px; min-width: 0; }
.select legend { padding: 0 5px 0 0; margin-left: -1px; font-size: 16.250px; letter-spacing: 0; line-height: 17px; color: #777; }
.select .caret { border-color: #888; }
.highlight { position: absolute; left: -28px; top: -21px; width: 452px; height: 159px; border: 4px solid #f00; border-radius: 2px; }
.plan { position: relative; width: 1467px; height: 468px; margin-top: 24px; background: #fff; }
.plan > svg { display: block; width: 1467px; height: 468px; }
.plan::after { content: ""; position: absolute; inset: 0; box-shadow: inset 0 0 8px rgba(0,0,0,.12); pointer-events: none; }
.axis { fill: none; stroke: #3c3c3c; stroke-width: 4.500; stroke-dasharray: 34 8 8 8; }
.room { font-family: "Liberation Sans", sans-serif; fill: #111; stroke: #111; stroke-width: 1.200; }
.tools { position: absolute; right: 32px; display: flex; flex-direction: column; z-index: 1; }
.tools.top { top: 62px; gap: 16px; }
.tools.bottom { bottom: 31px; gap: 1px; background: #ccc; box-shadow: 0 0 28px rgba(0,0,0,.13); }
.tools button { width: 46px; height: 47px; display: grid; place-items: center; }
.tools.bottom button { height: 46.500px; }
.tools.top button { box-shadow: 0 0 28px rgba(0,0,0,.13); }
.tools svg { width: 28px; height: 28px; }
```
